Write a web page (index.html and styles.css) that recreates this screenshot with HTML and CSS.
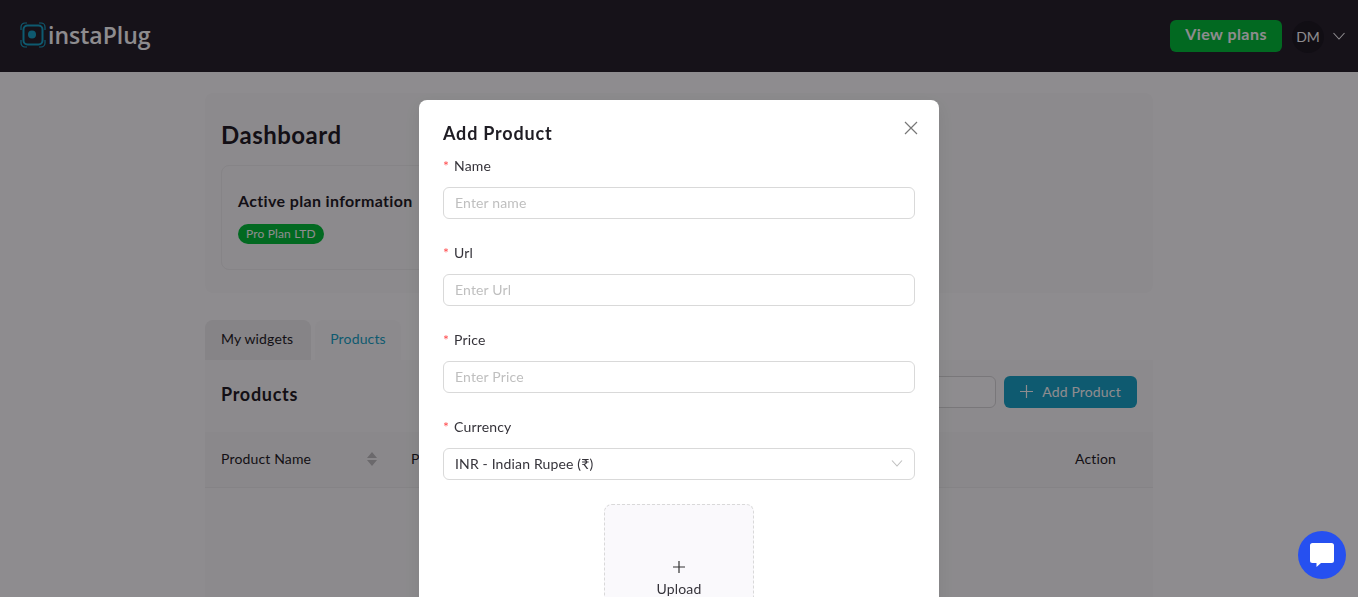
FILE: index.html
```html
<!DOCTYPE html>
<html lang="en">
<head>
    <meta charset="UTF-8">
    <meta name="viewport" content="width=device-width, initial-scale=1.0">
    <title>instaPlug Dashboard</title>
    <link rel="stylesheet" href="styles.css">
</head>
<body>

<header class="topbar">
    <div class="brand">
        <svg class="brand-icon" width="26" height="26" viewBox="0 0 26 26" fill="none">
            <rect x="3.500" y="3.500" width="19" height="19" rx="4" stroke="#17a5c6" stroke-width="2"></rect>
            <circle cx="12" cy="12.500" r="4" fill="#17a5c6"></circle>
            <path d="M1 8V5a4 4 0 0 1 4-4h2M19 1h2a4 4 0 0 1 4 4v3M25 18v3a4 4 0 0 1-4 4h-2M7 25H5a4 4 0 0 1-4-4v-3" stroke="#17a5c6" stroke-width="1.200"></path>
        </svg>
        <span class="brand-name">instaPlug</span>
    </div>
    <div class="topbar-right">
        <button class="plans-btn">View plans</button>
        <span class="avatar">DM</span>
        <svg width="14" height="14" viewBox="0 0 14 14" fill="none">
            <path d="M1.500 4l5.500 6 5.500-6" stroke="#fff" stroke-width="1.100"></path>
        </svg>
    </div>
</header>

<main class="container">
    <section class="card dashboard">
        <h1>Dashboard</h1>
        <div class="plan-box">
            <h3>Active plan information</h3>
            <span class="plan-tag">Pro Plan LTD</span>
        </div>
    </section>

    <div class="tabs">
        <div class="tab">My widgets</div>
        <div class="tab active">Products</div>
    </div>

    <section class="products">
        <div class="products-head">
            <h2>Products</h2>
            <div class="products-tools">
                <input class="search" type="text">
                <button class="add-btn">
                    <svg width="13" height="13" viewBox="0 0 13 13" fill="none"><path d="M6.500 0v13M0 6.500h13" stroke="#fff" stroke-width="1.200"></path></svg>
                    Add Product
                </button>
            </div>
        </div>
        <div class="table-head">
            <div class="th-name">
                Product Name
                <svg width="10" height="14" viewBox="0 0 10 14"><path d="M5 0l5 6H0zM5 14L0 8h10z" fill="#bfbfbf"></path></svg>
            </div>
            <div class="th-price">Price</div>
            <div class="th-action">Action</div>
        </div>
    </section>
</main>

<div class="overlay"></div>

<div class="modal">
    <svg class="modal-close" width="14" height="14" viewBox="0 0 14 14" fill="none">
        <path d="M1 1l12 12M13 1L1 13" stroke="#777" stroke-width="1.200"></path>
    </svg>
    <h4>Add Product</h4>
    <div class="field">
        <label><span class="req">*</span>Name</label>
        <input type="text" placeholder="Enter name">
    </div>
    <div class="field">
        <label><span class="req">*</span>Url</label>
        <input type="text" placeholder="Enter Url">
    </div>
    <div class="field">
        <label><span class="req">*</span>Price</label>
        <input type="text" placeholder="Enter Price">
    </div>
    <div class="field">
        <label><span class="req">*</span>Currency</label>
        <div class="select">
            INR - Indian Rupee (₹)
            <svg width="12" height="12" viewBox="0 0 12 12" fill="none"><path d="M1 3.500l5 5.500 5-5.500" stroke="#bfbfbf" stroke-width="1.100"></path></svg>
        </div>
    </div>
    <div class="upload">
        <svg width="14" height="14" viewBox="0 0 14 14" fill="none"><path d="M7 1v12M1 7h12" stroke="#333" stroke-width="1.200"></path></svg>
        <span>Upload</span>
    </div>
</div>

<button class="chat-btn">
    <svg width="26" height="26" viewBox="0 0 26 26"><path d="M3.500 1h19A2.500 2.500 0 0 1 25 3.500v15a2.500 2.500 0 0 1-2.500 2.500H12l-4.500 4v-4h-4A2.500 2.500 0 0 1 1 18.500v-15A2.500 2.500 0 0 1 3.500 1z" fill="#fff"></path></svg>
</button>

</body>
</html>
```

FILE: styles.css
```css
/* General Styles */
html, body {
    height: 100%;
}

body {
    font-family: "Lato", "Noto Sans", sans-serif;
    font-size: 14px;
    letter-spacing: 0.15px;
    color: #1f1d24;
    background-color: #fff;
    margin: 0;
    overflow: hidden;
}

h1, h2, h3, h4 {
    margin: 0;
}

/* Top bar */
.topbar {
    height: 72px;
    background-color: #252129;
    display: flex;
    align-items: center;
    justify-content: space-between;
    padding: 0 12px 0 20px;
    box-sizing: border-box;
}

.brand {
    display: flex;
    align-items: center;
    gap: 2px;
    color: #fff;
    margin-top: -2px;
}

.brand-name {
    font-family: "Open Sans", sans-serif;
    font-size: 23px;
    font-weight: 600;
    letter-spacing: 0;
}

.topbar-right {
    display: flex;
    align-items: center;
    margin-top: -1px;
}

.plans-btn {
    width: 112px;
    height: 32px;
    background-color: #00c038;
    color: #fff;
    border: none;
    border-radius: 6px;
    font-family: inherit;
    font-size: 16px;
    font-weight: 700;
    letter-spacing: 0.45px;
    padding: 0 0 4px;
    margin-right: 10px;
}

.avatar {
    width: 32px;
    height: 32px;
    background-color: #1c1a20;
    border-radius: 50%;
    color: #fff;
    letter-spacing: 0;
    display: flex;
    align-items: center;
    justify-content: center;
    margin-right: 8px;
    margin-top: 2px;
}

/* Page */
.container {
    width: 948px;
    margin: 21px auto 0;
}

.card {
    background-color: #fcfcfc;
    border-radius: 8px;
}

.dashboard {
    height: 200px;
    padding: 26px 16px 0;
    box-sizing: border-box;
}

.dashboard h1 {
    font-size: 24px;
    font-weight: 700;
    line-height: 32px;
    letter-spacing: 0.5px;
}

.plan-box {
    width: 500px;
    height: 105px;
    margin-top: 14px;
    padding: 24px 16px 0;
    box-sizing: border-box;
    border: 1px solid #f0f0f0;
    border-radius: 8px;
}

.plan-box h3 {
    font-size: 16px;
    font-weight: 700;
    line-height: 22px;
    letter-spacing: 0.35px;
}

.plan-tag {
    display: inline-block;
    margin-top: 12px;
    padding: 0 8px;
    height: 20px;
    line-height: 20px;
    font-size: 12px;
    color: #fff;
    background-color: #00c038;
    border-radius: 10px;
}

/* Tabs */
.tabs {
    display: flex;
    gap: 4px;
    margin-top: 27px;
    height: 40px;
}

.tab {
    width: 106px;
    box-sizing: border-box;
    padding: 0 16px;
    line-height: 37px;
    background-color: #f0f0f0;
    border-radius: 8px 8px 0 0;
}

.tab.active {
    width: 86px;
    background-color: #fcfcfc;
    color: #17a5c6;
    text-align: center;
    padding: 0;
}

/* Products table */
.products {
    background-color: #fcfcfc;
    height: 240px;
}

.products-head {
    height: 72px;
    padding: 16px;
    box-sizing: border-box;
    display: flex;
    align-items: flex-start;
    justify-content: space-between;
}

.products-head h2 {
    font-size: 18px;
    font-weight: 700;
    line-height: 36px;
    letter-spacing: 0.7px;
}

.products-tools {
    display: flex;
    gap: 8px;
}

.search {
    width: 120px;
    height: 32px;
    box-sizing: border-box;
    border: 1px solid #d9d9d9;
    border-radius: 6px;
}

.add-btn {
    width: 133px;
    height: 32px;
    background-color: #17a5c6;
    border: none;
    border-radius: 6px;
    color: #fff;
    font-family: inherit;
    font-size: 14px;
    letter-spacing: inherit;
    display: flex;
    align-items: center;
    justify-content: center;
    gap: 9px;
    padding: 0 0 1px;
}

.table-head {
    height: 56px;
    background-color: #f8f8f8;
    border-bottom: 1px solid #efefef;
    display: flex;
    align-items: center;
    padding: 0 16px 2px;
    box-sizing: border-box;
}

.th-name {
    width: 190px;
    display: flex;
    align-items: center;
    justify-content: space-between;
    padding-right: 34px;
    box-sizing: border-box;
}

.th-price {
    flex: 1;
}

.th-action {
    width: 62px;
}

/* Modal */
.overlay {
    position: fixed;
    inset: 0;
    background-color: rgba(4, 0, 6, 0.45);
}

.modal {
    position: fixed;
    top: 100px;
    left: 419px;
    width: 520px;
    height: 620px;
    background-color: #fff;
    border-radius: 8px;
    padding: 19px 24px;
    box-sizing: border-box;
    box-shadow: 0 6px 16px rgba(0, 0, 0, 0.08);
}

.modal h4 {
    font-size: 18px;
    font-weight: 700;
    line-height: 28px;
    letter-spacing: 0.8px;
    margin-bottom: 8px;
}

.modal-close {
    position: absolute;
    top: 21px;
    right: 21px;
}

.field {
    margin-bottom: 23px;
}

.field label {
    display: block;
    height: 22px;
    line-height: 22px;
    margin-bottom: 10px;
    color: #35333a;
}

.req {
    color: #ff4d4f;
    margin-right: 5px;
    font-size: 14px;
}

.field input, .select {
    display: flex;
    width: 100%;
    height: 32px;
    box-sizing: border-box;
    padding: 0 11px 2px;
    border: 1px solid #d9d9d9;
    border-radius: 6px;
    font-family: inherit;
    font-size: 14px;
    letter-spacing: inherit;
    color: #35333a;
    align-items: center;
    justify-content: space-between;
    outline: none;
}

.field input::placeholder {
    color: #bfbfbf;
}

.upload {
    width: 150px;
    height: 150px;
    margin: 24px auto 0;
    box-sizing: border-box;
    background-color: #faf9fc;
    border: 1px dashed #d9d9d9;
    border-radius: 8px;
    display: flex;
    flex-direction: column;
    align-items: center;
    justify-content: center;
    gap: 6px;
    color: #35333a;
    padding-bottom: 2px;
}

/* Chat launcher */
.chat-btn {
    position: fixed;
    right: 12px;
    bottom: 18px;
    width: 48px;
    height: 48px;
    border: none;
    border-radius: 50%;
    background-color: #2650f0;
    display: flex;
    align-items: center;
    justify-content: center;
    padding: 0;
}
```
